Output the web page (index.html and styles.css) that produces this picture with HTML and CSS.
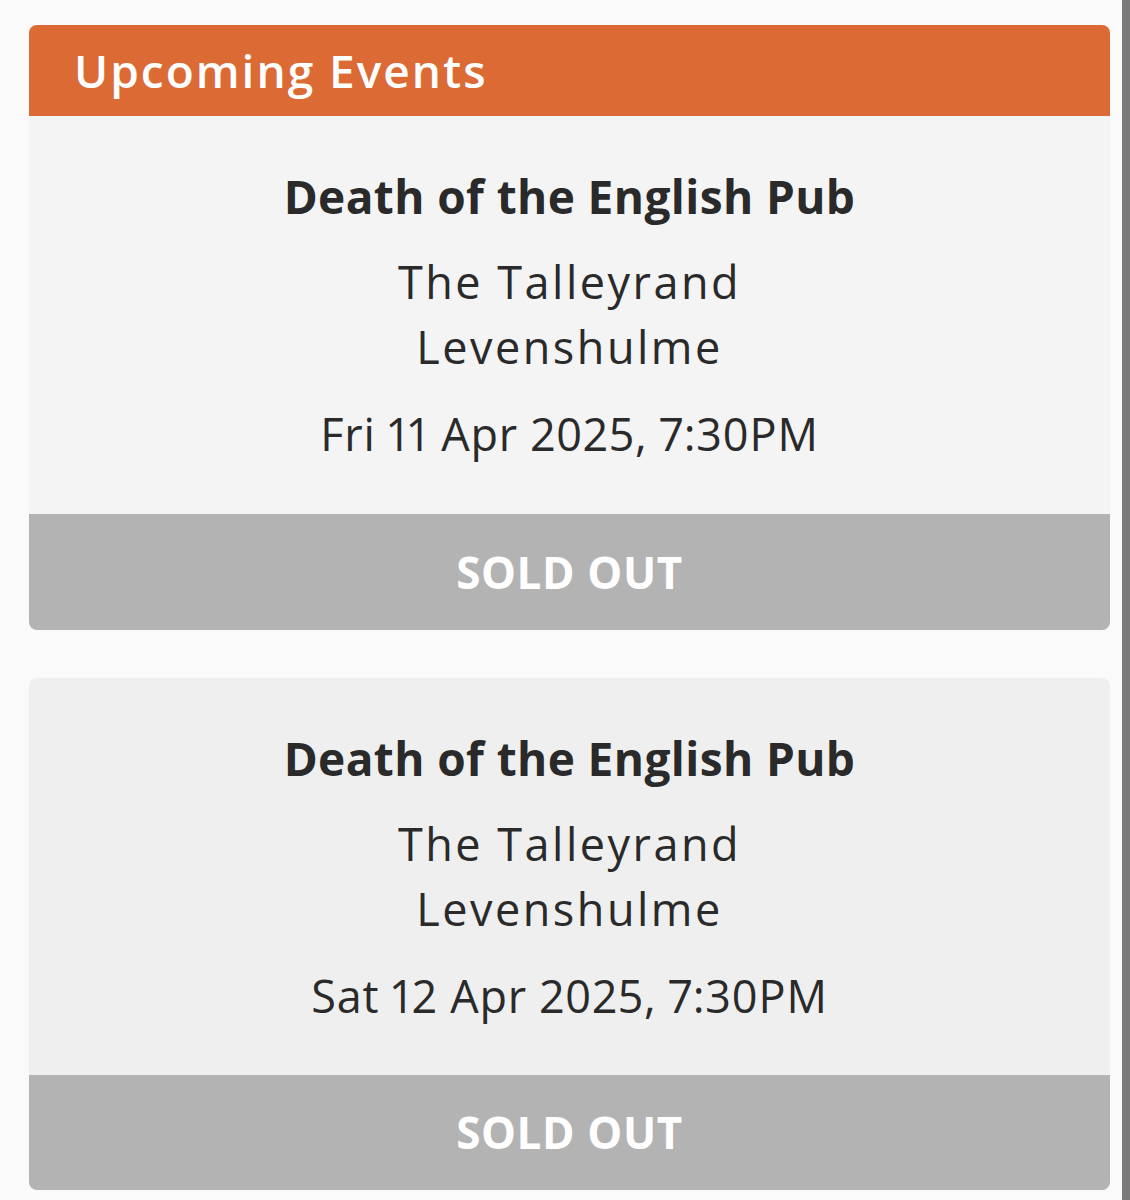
FILE: index.html
```html
<!DOCTYPE html>
<html lang="en">
<head>
<meta charset="utf-8">
<title>Upcoming Events</title>
<link rel="stylesheet" href="styles.css">
</head>
<body>
<div class="page">
  <main class="events">
    <section class="card">
      <h2 class="card-header">Upcoming Events</h2>
      <div class="card-body">
        <h3 class="event-title">Death of the English Pub</h3>
        <p class="event-venue">The Talleyrand<br>Levenshulme</p>
        <p class="event-date">Fri 11 Apr 2025, 7:30PM</p>
      </div>
      <div class="sold-out">SOLD OUT</div>
    </section>
    <section class="card card-alt">
      <div class="card-body">
        <h3 class="event-title">Death of the English Pub</h3>
        <p class="event-venue">The Talleyrand<br>Levenshulme</p>
        <p class="event-date">Sat 12 Apr 2025, 7:30PM</p>
      </div>
      <div class="sold-out">SOLD OUT</div>
    </section>
  </main>
  <div class="edge"></div>
</div>
</body>
</html>
```
FILE: styles.css
```css
* { box-sizing: border-box; }
html, body { margin: 0; padding: 0; }
body {
  background: #fafafa;
  font-family: "Open Sans", "Noto Sans", sans-serif;
  color: #2a2a2a;
}
.page {
  display: flex;
  min-height: 1200px;
}
.events {
  flex: 1;
  padding: 25px 12px 0 29px;
  display: flex;
  flex-direction: column;
  gap: 48px;
}
.edge {
  width: 8px;
  background: #7a7a7a;
}
.card {
  border-radius: 8px;
  overflow: hidden;
  background: #f4f4f4;
}
.card-alt { background: #efefef; }
.card-header {
  margin: 0;
  background: #dc6a35;
  color: #fff;
  font-size: 46px;
  font-weight: 600;
  letter-spacing: 2px;
  line-height: 91px;
  height: 91px;
  padding-left: 45px;
}
.card-body {
  padding: 48px 20px 48px;
  text-align: center;
}
.card-alt .card-body { padding-bottom: 47px; }
.event-title {
  margin: 0;
  font-size: 46px;
  font-weight: 700;
  letter-spacing: 0.4px;
  line-height: 64px;
}
.event-venue {
  margin: 21px 0 0;
  font-size: 45px;
  font-weight: 400;
  letter-spacing: 2.5px;
  line-height: 65px;
}
.event-date {
  margin: 23px 0 0;
  font-size: 45px;
  font-weight: 400;
  letter-spacing: 0.8px;
  font-variant-numeric: proportional-nums;
  line-height: 64px;
}
.sold-out {
  background: #b3b3b3;
  color: #fff;
  text-align: center;
  font-size: 44px;
  font-weight: 700;
  letter-spacing: 0.6px;
  line-height: 116px;
  height: 116px;
}
.card-alt .sold-out { height: 115px; line-height: 115px; }
```
